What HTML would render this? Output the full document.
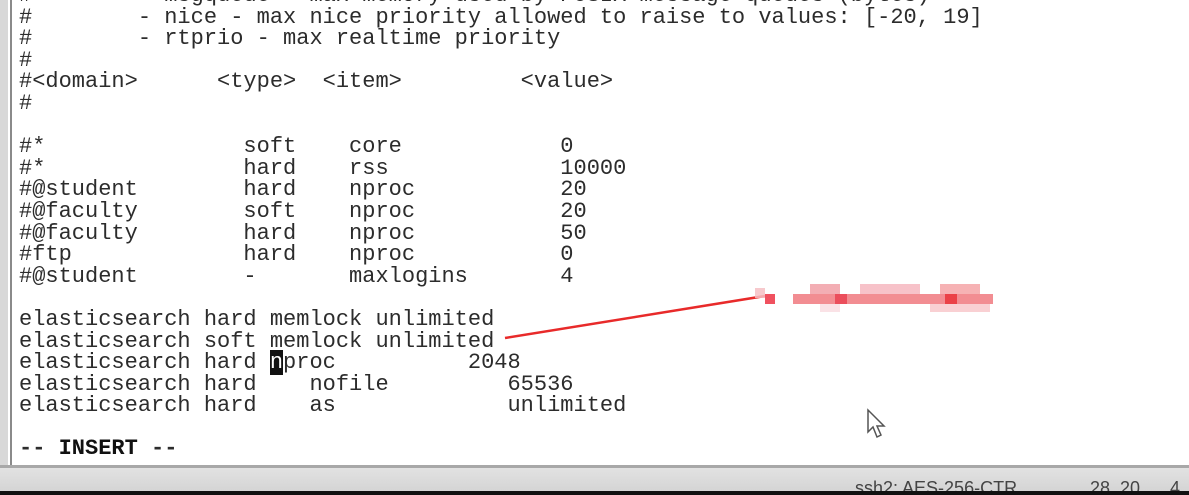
<!DOCTYPE html>
<html><head><meta charset="utf-8"><style>
html,body{margin:0;padding:0;width:1189px;height:495px;overflow:hidden;background:#fff;position:relative}
#lb{position:absolute;left:0;top:0;width:8px;height:467px;background:#d8d8d8}
#ll{position:absolute;left:10px;top:0;width:2px;height:465px;background:#8a8a8a}
#bb{position:absolute;left:0;top:465px;width:1189px;height:3px;background:#a8a8a8}
#status{position:absolute;left:0;top:468px;width:1189px;height:24px;background:linear-gradient(#e2e2e2,#d4d4d4)}
#black{position:absolute;left:0;top:491px;width:1189px;height:4px;background:#111}
pre{position:absolute;left:19px;top:-15px;margin:0;font-family:"Liberation Mono",monospace;font-size:22px;line-height:21.6px;color:#2c2c2c;filter:blur(0.35px);letter-spacing:0}
.cur{background:#111;color:#fff}
.st{position:absolute;top:478px;font-family:"Liberation Sans",sans-serif;font-size:18px;color:#444}
</style></head><body>
<div id="lb"></div><div id="ll"></div>
<pre>#        - msgqueue - max memory used by POSIX message queues (bytes)
#        - nice - max nice priority allowed to raise to values: [-20, 19]
#        - rtprio - max realtime priority
#
#&lt;domain&gt;      &lt;type&gt;  &lt;item&gt;         &lt;value&gt;
#

#*               soft    core            0
#*               hard    rss             10000
#@student        hard    nproc           20
#@faculty        soft    nproc           20
#@faculty        hard    nproc           50
#ftp             hard    nproc           0
#@student        -       maxlogins       4

elasticsearch hard memlock unlimited
elasticsearch soft memlock unlimited
elasticsearch hard <span class="cur">n</span>proc          2048
elasticsearch hard    nofile         65536
elasticsearch hard    as             unlimited

<b>--</b> <b style="color:#111">INSERT</b> <b>--</b></pre>
<svg style="position:absolute;left:0;top:0" width="1189" height="495">
<line x1="505" y1="338" x2="765" y2="296" stroke="#e82a2a" stroke-width="2.5"/>
<g opacity="0.85">
<rect x="755" y="288" width="10" height="10" fill="#f6c0c4"/>
<rect x="765" y="294" width="10" height="10" fill="#ee3344"/>
<rect x="793" y="294" width="200" height="10" fill="#f07a80"/>
<rect x="810" y="284" width="30" height="10" fill="#f2a0a8"/>
<rect x="860" y="284" width="60" height="10" fill="#f6b8c0"/>
<rect x="940" y="284" width="40" height="10" fill="#f5a5a8"/>
<rect x="820" y="304" width="20" height="8" fill="#fadde2"/>
<rect x="930" y="304" width="60" height="8" fill="#f8c8cc"/>
<rect x="835" y="294" width="12" height="10" fill="#e83040"/>
<rect x="945" y="294" width="12" height="10" fill="#e82028"/>
</g>
<path d="M868 410 L868 432 L873 427 L877 437 L881 435 L877 426 L884 426 Z" fill="#fff" stroke="#555" stroke-width="1.5"/>
</svg>
<div id="bb"></div><div id="status"></div>
<div class="st" style="left:855px">ssh2: AES-256-CTR</div>
<div class="st" style="left:1090px">28, 20</div>
<div class="st" style="left:1170px">4</div>
<div id="black"></div>
</body></html>
